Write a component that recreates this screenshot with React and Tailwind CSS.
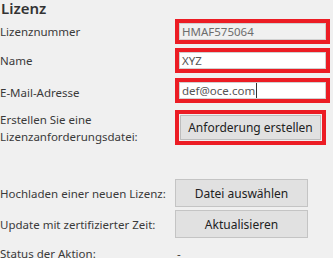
export default function App() {
  return (
    <div className="h-[258px] w-[333px] overflow-hidden bg-[#f0f0f0] font-['Noto_Sans',sans-serif] text-[11.5px] leading-[17px] text-[#3a3a3a]">
      <h2 className="h-[19px] pl-[1px] text-[15px] font-semibold leading-[16px] text-[#333]">Lizenz</h2>

      <div className="flex h-[25px] items-center">
        <div className="w-[175px]">Lizenznummer</div>
        <div className="h-[25px] w-[155px] border-[4px] border-[#ec1c24]">
          <div className="flex h-full items-center border border-[#d0d0d0] bg-[#f0f0f0] pl-[2px] text-[#6d6d6d]">HMAF575064</div>
        </div>
      </div>

      <div className="mt-[4px] flex h-[25px] items-center">
        <div className="w-[175px]">Name</div>
        <div className="h-[25px] w-[155px] border-[4px] border-[#ec1c24]">
          <div className="flex h-full items-center border border-[#d0d0d0] bg-white pl-[2px] text-[#555]">XYZ</div>
        </div>
      </div>

      <div className="mt-[5px] flex h-[25px] items-center">
        <div className="w-[175px] pt-[3px]">E-Mail-Adresse</div>
        <div className="h-[25px] w-[155px] border-[4px] border-[#ec1c24]">
          <div className="flex h-full items-center border border-[#d0d0d0] bg-white pl-[2px] text-[#555]">
            def@oce.com<span className="ml-[1px] h-[15px] w-px bg-[#333]" />
          </div>
        </div>
      </div>

      <div className="mt-[7px] flex h-[35px] items-center">
        <div className="w-[175px]">
          Erstellen Sie eine
          <br />
          Lizenzanforderungsdatei:
        </div>
        <div className="h-[35px] w-[151px] border-[4px] border-[#ec1c24] p-[1px]">
          <button className="h-full w-full border border-[#bdbdbd] bg-[#e1e1e1] text-[12px] text-[#222]">
            Anforderung erstellen
          </button>
        </div>
      </div>

      <div className="mt-[34px] flex h-[28px] items-center">
        <div className="w-[175px]">Hochladen einer neuen Lizenz:</div>
        <button className="h-[28px] w-[133px] border border-[#c4c4c4] bg-[#e1e1e1] text-[12px] text-[#222]">
          Datei auswählen
        </button>
      </div>

      <div className="mt-[3px] flex h-[28px] items-center">
        <div className="w-[175px]">Update mit zertifizierter Zeit:</div>
        <button className="h-[28px] w-[133px] border border-[#c4c4c4] bg-[#e1e1e1] text-[12px] text-[#222]">
          Aktualisieren
        </button>
      </div>

      <div className="mt-[7px] flex h-[17px] items-center">
        <div className="w-[175px]">Status der Aktion:</div>
        <div className="pl-[2px]">-</div>
      </div>
    </div>
  );
}
